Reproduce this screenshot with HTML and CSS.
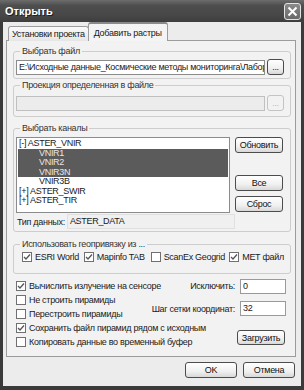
FILE: index.html
```html
<!DOCTYPE html>
<html lang="ru">
<head>
  <meta charset="UTF-8">
  <title>Открыть</title>
  <link rel="stylesheet" href="styles.css">
</head>
<body>
  <div class="window">
    <div class="titlebar">
      <span class="title">Открыть</span>
      <span class="close">
        <svg width="11" height="11" viewBox="0 0 11 11"><path d="M1.5 1.5 L9.5 9.5 M9.5 1.5 L1.5 9.5" stroke="#fff" stroke-width="2"/></svg>
      </span>
    </div>

    <div class="client">
      <div class="tabs">
        <div class="tab">Установки проекта</div>
        <div class="tab active">Добавить растры</div>
      </div>

      <div class="panel">
        <fieldset class="group g-file">
          <legend>Выбрать файл</legend>
          <div class="row">
            <div class="field wide">E:\Исходные данные_Космические методы мониторинга\Лабор</div>
            <button class="btn dots">...</button>
          </div>
        </fieldset>

        <fieldset class="group g-proj">
          <legend>Проекция определенная в файле</legend>
          <div class="row">
            <div class="field wide disabled"></div>
            <button class="btn dots disabled">...</button>
          </div>
        </fieldset>

        <fieldset class="group g-bands">
          <legend>Выбрать каналы</legend>
          <div class="bands">
            <div class="list">
              <div class="item">[-] ASTER_VNIR</div>
              <div class="item sub sel">VNIR1</div>
              <div class="item sub sel">VNIR2</div>
              <div class="item sub sel">VNIR3N</div>
              <div class="item sub">VNIR3B</div>
              <div class="item">[+] ASTER_SWIR</div>
              <div class="item">[+] ASTER_TIR</div>
            </div>
            <div class="side">
              <button class="btn side-btn">Обновить</button>
              <button class="btn side-btn b-all">Все</button>
              <button class="btn side-btn">Сброс</button>
            </div>
          </div>
          <div class="type-row">
            <span class="type-label">Тип данных:</span>
            <div class="field type-field">ASTER_DATA</div>
          </div>
        </fieldset>

        <fieldset class="group g-geo">
          <legend>Использовать геопривязку из ...</legend>
          <div class="geo-row">
            <label class="check c-esri"><span class="cb on"></span>ESRI World</label>
            <label class="check c-mapinfo"><span class="cb on"></span>Mapinfo TAB</label>
            <label class="check c-scanex"><span class="cb"></span>ScanEx Geogrid</label>
            <label class="check"><span class="cb on"></span>МЕТ файл</label>
          </div>
        </fieldset>

        <div class="options">
          <label class="check r1"><span class="cb on"></span>Вычислить излучение на сенсоре</label>
          <label class="check r2"><span class="cb"></span>Не строить пирамиды</label>
          <label class="check r3"><span class="cb"></span>Перестроить пирамиды</label>
          <label class="check r4"><span class="cb on"></span>Сохранить файл пирамид рядом с исходным</label>
          <label class="check r5"><span class="cb"></span>Копировать данные во временный буфер</label>
          <div class="param p-skip"><span>Исключить:</span><div class="field num">0</div></div>
          <div class="param p-step"><span>Шаг сетки координат:</span><div class="field num">32</div></div>
          <button class="btn load">Загрузить</button>
        </div>
      </div>

      <div class="footer">
        <button class="btn foot">OK</button>
        <button class="btn foot">Отмена</button>
      </div>
    </div>
  </div>
</body>
</html>
```

FILE: styles.css
```css
body {
  margin: 0;
  font-family: 'Liberation Sans', Arial, sans-serif;
  font-size: 9px;
  letter-spacing: -0.3px;
  color: #1a1a1a;
  background: #2e2e2e;
}

.window {
  width: 304px;
  height: 390px;
  display: flex;
  flex-direction: column;
  overflow: hidden;
}

.titlebar {
  height: 22px;
  flex: none;
  display: flex;
  align-items: center;
  justify-content: space-between;
  padding: 0 3px 0 5px;
  box-sizing: border-box;
  background: linear-gradient(#6c6c6c, #4e4e4e 25%, #474747 70%, #3e3e3e);
}

.title {
  color: #fff;
  font-weight: bold;
  font-size: 11px;
  letter-spacing: 0;
  text-shadow: 1px 1px 0 #222;
}

.close {
  width: 15px;
  height: 15px;
  display: flex;
  align-items: center;
  justify-content: center;
  border: 1px solid #e4e4e4;
  border-radius: 3px;
  background: linear-gradient(#8a8a8a, #6a6a6a);
}

.client {
  flex: 1;
  background: #ececec;
  border: 3px solid #3a3a3a;
  border-top: none;
  border-bottom-width: 4px;
  display: flex;
  flex-direction: column;
  min-height: 0;
}

.tabs {
  display: flex;
  align-items: flex-end;
  height: 19px;
  padding-left: 5px;
  margin-bottom: -1px;
  position: relative;
  z-index: 1;
}

.tab {
  height: 15px;
  line-height: 15px;
  padding: 0 3px;
  border: 1px solid #9c9c9c;
  border-bottom: none;
  border-radius: 3px 3px 0 0;
  background: linear-gradient(#fafafa, #e6e6e6);
  box-sizing: border-box;
  white-space: nowrap;
}

.tab.active {
  height: 19px;
  line-height: 18px;
  padding: 0 5px;
  background: #f4f4f4;
  border-top: 2px solid #8a8a8a;
  margin-left: -1px;
}

.panel {
  margin-left: 3px;
  width: 290px;
  height: 317px;
  box-sizing: border-box;
  border: 1px solid #9c9c9c;
  background: #f2f2f2;
  padding: 0 4px 0 6px;
}

.group {
  margin: 0;
  min-width: 0;
  padding: 0 6px 0 2px;
  border: 1px solid #cdcdcd;
  border-radius: 3px;
}

.group legend {
  padding: 0 2px;
  margin-left: 4px;
  line-height: 12px;
  color: #333;
}

.row {
  display: flex;
  gap: 2px;
  align-items: center;
}

.g-file {
  margin-top: 4px;
}

.g-file .row {
  padding: 2px 0 3px;
}

.g-proj .row {
  padding: 4px 0 5px;
}

.field {
  height: 15px;
  line-height: 13px;
  box-sizing: border-box;
  border: 1px solid #8c8c8c;
  background: #fff;
  padding: 0 2px;
  white-space: nowrap;
  overflow: hidden;
  min-width: 0;
}

.field.wide {
  flex: 1;
}

.field.disabled {
  background: #ececec;
  border-color: #c0c0c0;
}

.btn {
  font: inherit;
  letter-spacing: inherit;
  color: #111;
  padding: 0;
  height: 16px;
  border: 1px solid #4c4c4c;
  border-radius: 3px;
  background: linear-gradient(#ffffff, #f0f0f0 60%, #d8d8d8);
  box-sizing: border-box;
  white-space: nowrap;
  flex: none;
}

.btn.dots {
  width: 17px;
  line-height: 10px;
}

.btn.disabled {
  border-color: #c4c4c4;
  color: #bbb;
  background: #f2f2f2;
}

.g-bands {
  margin-top: 5px;
}

.bands {
  display: flex;
  gap: 5px;
  padding-top: 3px;
}

.list {
  width: 214px;
  height: 76px;
  box-sizing: border-box;
  border: 1px solid #8c8c8c;
  background: #fff;
  padding: 1px 1px 0;
}

.item {
  height: 9.5px;
  line-height: 9.5px;
  padding-left: 1px;
  white-space: nowrap;
}

.item.sub {
  padding-left: 21px;
}

.item.sel {
  background: #5b5b5b;
  color: #e8e8e8;
}

.side {
  display: flex;
  flex-direction: column;
  width: 48px;
}

.side-btn {
  width: 48px;
}

.side-btn.b-all {
  margin-top: 22px;
  margin-bottom: 5px;
}

.type-row {
  display: flex;
  align-items: center;
  gap: 2px;
  padding: 1px 0 2px 0;
}

.type-label {
  padding-left: 1px;
}

.type-field {
  width: 168px;
  background: #f0f0f0;
  border-color: #e0e0e0;
}

.g-geo {
  margin-top: 6px;
}

.geo-row {
  display: flex;
  align-items: center;
  padding: 2px 0 11px 6px;
}

.check {
  display: flex;
  align-items: center;
  gap: 3px;
  line-height: 10px;
  white-space: nowrap;
}

.c-esri {
  width: 63px;
}

.c-mapinfo {
  width: 68px;
}

.c-scanex {
  width: 80px;
}

.cb {
  width: 10px;
  height: 10px;
  flex: none;
  box-sizing: border-box;
  border: 1px solid #707070;
  background: #fff;
}

.cb.on {
  background: #fff url("data:image/svg+xml,%3Csvg xmlns='http://www.w3.org/2000/svg' width='8' height='8'%3E%3Cpath d='M1 4 L3 6 L7 1.5' fill='none' stroke='%23555' stroke-width='1.3'/%3E%3C/svg%3E") center/8px 8px no-repeat;
}

.options {
  display: grid;
  grid-template-columns: minmax(0, 1fr) auto;
  grid-template-rows: repeat(5, 14px);
  padding: 5px 5px 0 3px;
}

.options .check {
  grid-column: 1;
  align-self: center;
}

.r1 { grid-row: 1; }
.r2 { grid-row: 2; }
.r3 { grid-row: 3; }
.r4 { grid-row: 4; }
.r5 { grid-row: 5; }

.param {
  grid-column: 2;
  display: flex;
  align-items: center;
  justify-content: flex-end;
  gap: 5px;
  white-space: nowrap;
}

.p-skip {
  grid-row: 1;
}

.p-step {
  grid-row: 2 / 4;
  padding-top: 3px;
}

.field.num {
  width: 46px;
  border-color: #9a9a9a;
}

.btn.load {
  grid-column: 2;
  grid-row: 4 / 6;
  justify-self: end;
  align-self: center;
  width: 48px;
  height: 15px;
  margin: 5px 1px 0 0;
}

.footer {
  display: flex;
  justify-content: flex-end;
  gap: 6px;
  padding: 5px 6px 0 0;
}

.btn.foot {
  width: 52px;
  height: 16px;
}
```
